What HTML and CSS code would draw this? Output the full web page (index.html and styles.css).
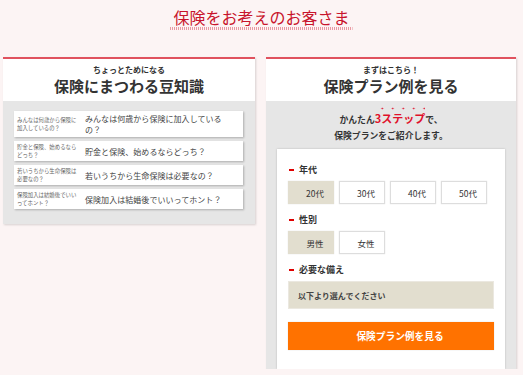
FILE: index.html
```html
<!DOCTYPE html>
<html lang="ja">
<head>
    <meta charset="UTF-8">
    <meta name="viewport" content="width=device-width, initial-scale=1.0">
    <title>保険をお考えのお客さま</title>
    <link rel="stylesheet" href="styles.css">
</head>
<body>
    <div class="page">
        <h1 class="title"><span>保険をお考えのお客さま</span></h1>

        <div class="cards">
            <div class="card card-tips">
                <div class="card-head">
                    <p class="card-sub">ちょっとためになる</p>
                    <h2 class="card-main">保険にまつわる豆知識</h2>
                </div>
                <div class="card-body tips">
                    <div class="tip">
                        <span class="tip-small">みんなは何歳から保険に加入しているの？</span>
                        <span class="tip-text">みんなは何歳から保険に加入しているの？</span>
                    </div>
                    <div class="tip">
                        <span class="tip-small">貯金と保険、始めるならどっち？</span>
                        <span class="tip-text">貯金と保険、始めるならどっち？</span>
                    </div>
                    <div class="tip">
                        <span class="tip-small">若いうちから生命保険は必要なの？</span>
                        <span class="tip-text">若いうちから生命保険は必要なの？</span>
                    </div>
                    <div class="tip">
                        <span class="tip-small">保険加入は結婚後でいいってホント？</span>
                        <span class="tip-text">保険加入は結婚後でいいってホント？</span>
                    </div>
                </div>
            </div>

            <div class="card card-plan">
                <div class="card-head">
                    <p class="card-sub">まずはこちら！</p>
                    <h2 class="card-main">保険プラン例を見る</h2>
                </div>
                <div class="card-body plan">
                    <p class="intro">かんたん<em>3ステップ</em>で、<br>保険プランをご紹介します。</p>

                    <div class="form-box">
                        <div class="field-label">年代</div>
                        <div class="choices">
                            <button class="choice active">20代</button>
                            <button class="choice">30代</button>
                            <button class="choice">40代</button>
                            <button class="choice">50代</button>
                        </div>

                        <div class="field-label">性別</div>
                        <div class="choices">
                            <button class="choice active">男性</button>
                            <button class="choice">女性</button>
                        </div>

                        <div class="field-label">必要な備え</div>
                        <div class="select-box">以下より選んでください</div>

                        <button class="submit">保険プラン例を見る</button>
                    </div>
                </div>
            </div>
        </div>
    </div>
</body>
</html>
```

FILE: styles.css
```css
:root {
    --red: #c8142c;
    --pink-line: #e0525e;
    --grey: #e6e6e6;
    --beige: #e2decf;
    --orange: #ff7200;
    --text: #333;
}

* {
    box-sizing: border-box;
    margin: 0;
    padding: 0;
}

body {
    font-family: "Noto Sans CJK JP", "Noto Sans", sans-serif;
    background: #fcf4f4;
    color: var(--text);
    overflow: hidden;
}

.title {
    text-align: center;
    padding-top: 7px;
    font-size: 16px;
    line-height: 20px;
    font-weight: 400;
    color: var(--red);
}

.title span {
    display: inline-block;
    padding: 0 3px 3px;
    background: repeating-linear-gradient(90deg, #e99aa3 0 1px, transparent 1px 2px) bottom / 100% 3px no-repeat;
}

.cards {
    display: flex;
    align-items: flex-start;
    gap: 11px;
    margin-top: 27px;
    padding-left: 3px;
}

.card {
    background: var(--grey);
    border-top: 2px solid var(--pink-line);
    box-shadow: 1px 1px 2px rgba(0, 0, 0, 0.15);
}

.card-tips {
    width: 252px;
}

.card-plan {
    width: 250px;
}

.card-head {
    background: white;
    text-align: center;
    padding: 6px 0 6px;
}

.card-sub {
    font-size: 8px;
    line-height: 10px;
    font-weight: 700;
}

.card-main {
    margin-top: 2px;
    font-size: 15px;
    line-height: 18px;
    font-weight: 700;
}

.tips {
    display: flex;
    flex-direction: column;
    gap: 4px;
    padding: 10px 12px 15px 11px;
}

.tip {
    display: flex;
    align-items: center;
    gap: 5px;
    background: white;
    padding: 2px 3px;
    box-shadow: 1px 1px 2px rgba(0, 0, 0, 0.25);
}

.tip-small {
    flex: 0 0 63px;
    font-size: 5.4px;
    line-height: 8px;
    color: #666;
}

.tip-text {
    flex: 0 0 146px;
    font-size: 8px;
    line-height: 11px;
    letter-spacing: 0.05px;
    color: #444;
}

.plan {
    padding: 9px 11px 0;
}

.intro {
    text-align: center;
    font-size: 8.8px;
    line-height: 16px;
    height: 32px;
    font-weight: 700;
    margin-bottom: 7px;
}

.intro em {
    font-style: normal;
    font-size: 11px;
    line-height: 16px;
    padding-top: 3px;
    color: #e0102a;
    background: radial-gradient(circle, #e0102a 0.7px, transparent 1.1px) 2px 0 / 10.5px 3px repeat-x;
}

.form-box {
    background: white;
    padding: 14px 11px 19px;
    box-shadow: 0 0 2px rgba(0, 0, 0, 0.2);
}

.field-label {
    display: flex;
    align-items: center;
    font-size: 9px;
    line-height: 14px;
    font-weight: 700;
}

.field-label::before {
    content: "";
    width: 5px;
    height: 2px;
    margin: 0 5px 0 1px;
    background: #e00000;
}

.choices {
    display: flex;
    gap: 5px;
    margin: 4px 0 9px;
}

.choice {
    width: 46px;
    height: 23px;
    padding-left: 8px;
    background: white;
    border: 1px solid #ddd;
    box-shadow: 0 0 1px rgba(0, 0, 0, 0.15);
    font-family: inherit;
    font-size: 8.5px;
    color: var(--text);
}

.choice.active {
    background: var(--beige);
    border-color: var(--beige);
}

.select-box {
    margin-top: 4px;
    height: 28px;
    padding-left: 9px;
    display: flex;
    align-items: center;
    background: var(--beige);
    border: 1px solid #ebe8e0;
    font-size: 8px;
    font-weight: 700;
    color: #444;
}

.submit {
    display: block;
    width: 100%;
    height: 28px;
    margin-top: 13px;
    padding-left: 18px;
    background: var(--orange);
    border: none;
    box-shadow: 0 0 1px rgba(0, 0, 0, 0.2);
    font-family: inherit;
    font-size: 9.7px;
    font-weight: 700;
    color: white;
}
```
